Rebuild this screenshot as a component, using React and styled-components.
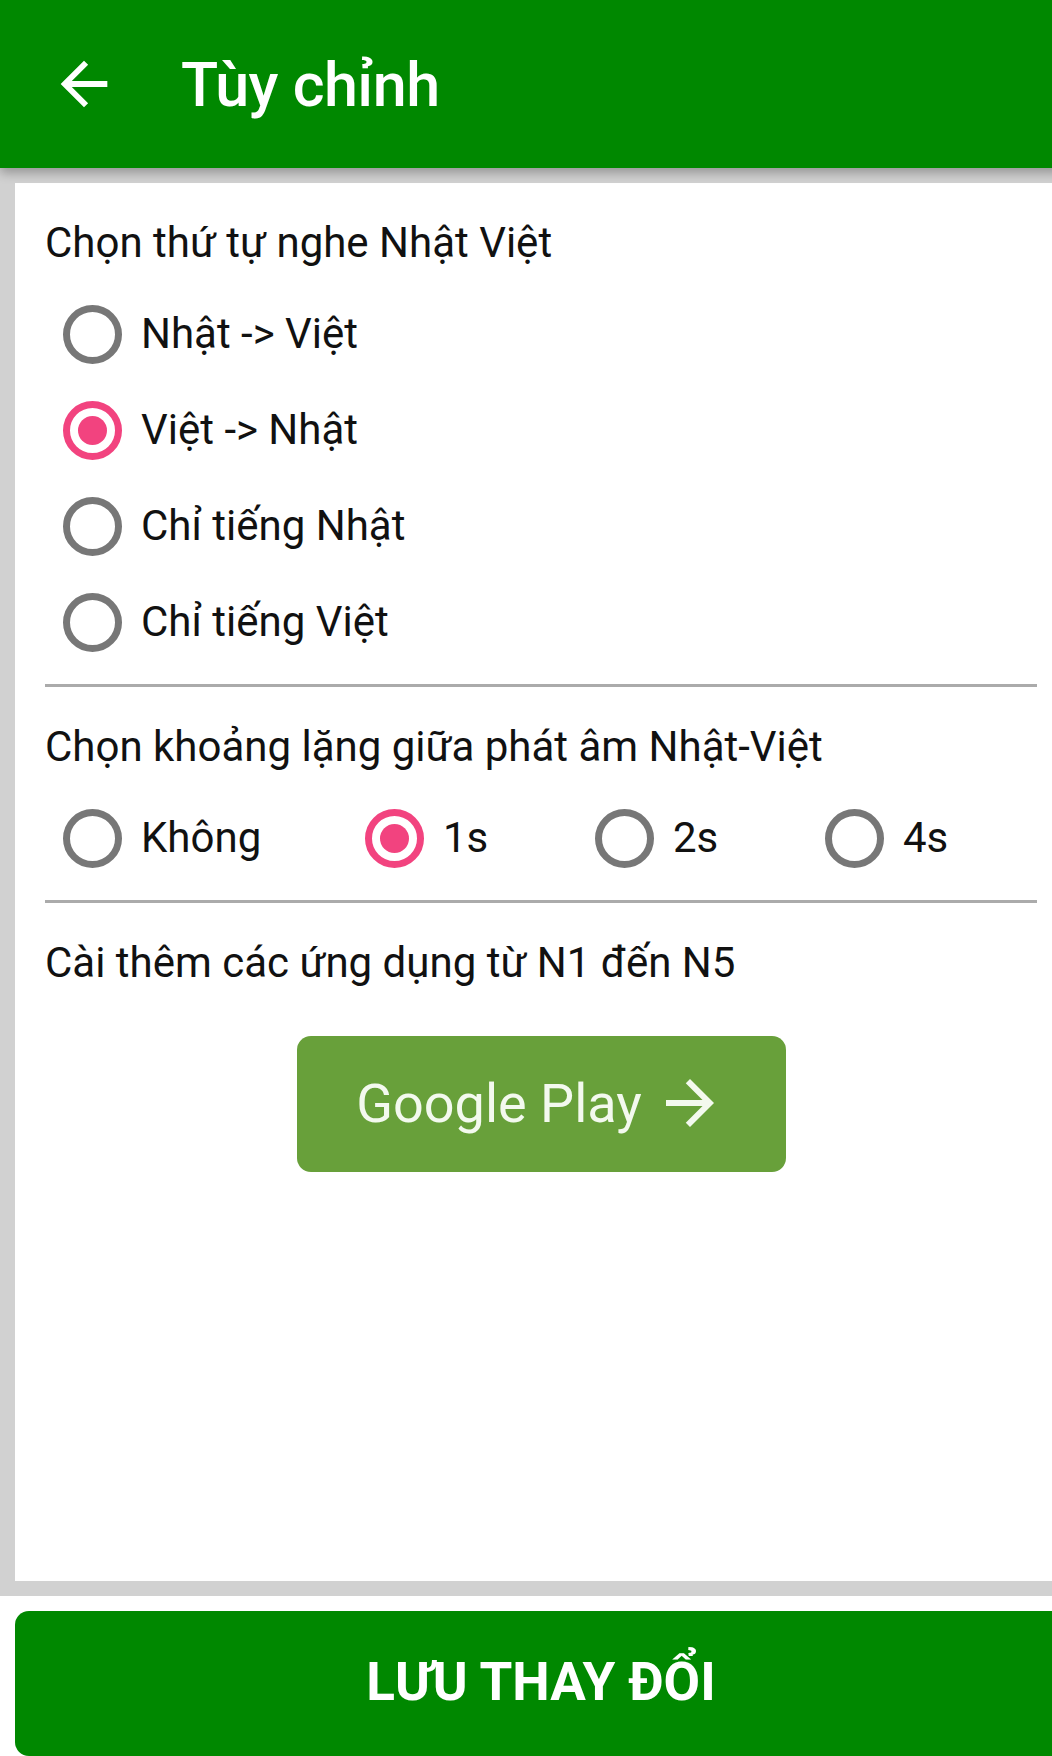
import React, { useState } from "react";
import styled, { createGlobalStyle } from "styled-components";

const GlobalStyle = createGlobalStyle`
  html, body {
    margin: 0;
    padding: 0;
    background: #ffffff;
    overflow-x: hidden;
  }
  body {
    font-family: Roboto, "Noto Sans", "Liberation Sans", sans-serif;
    color: #111;
  }
  * { box-sizing: border-box; }
`;

const Screen = styled.div`
  width: calc(100% + 30px);
  display: flex;
  flex-direction: column;
`;

const Toolbar = styled.header`
  position: relative;
  z-index: 2;
  height: 168px;
  background: #008800;
  display: flex;
  align-items: center;
  padding-left: 49px;
  gap: 62px;
  box-shadow: 0 5px 10px rgba(0, 0, 0, 0.28);
`;

const IconButton = styled.button`
  width: 70px;
  height: 70px;
  padding: 0;
  border: 0;
  background: transparent;
  display: flex;
  align-items: center;
  justify-content: center;
  color: #ffffff;
  svg { display: block; }
`;

const Title = styled.h1`
  margin: 0;
  color: #ffffff;
  font-size: 61px;
  font-weight: 500;
  letter-spacing: -0.5px;
  line-height: 1;
  padding-top: 2px;
`;

const Body = styled.main`
  background: #d1d1d1;
  padding: 15px;
`;

const Card = styled.section`
  background: #ffffff;
  height: 1398px;
  padding: 36px 30px 0 30px;
  display: flex;
  flex-direction: column;
`;

const SectionTitle = styled.div`
  font-size: 42px;
  line-height: 48px;
  color: #111;
  margin-top: ${(p) => (p.$first ? "0" : "36px")};
`;

const RadioGroup = styled.div`
  margin-top: 19px;
  padding-left: 18px;
  display: flex;
  flex-direction: ${(p) => (p.$row ? "row" : "column")};
`;

const RadioItem = styled.label`
  height: 96px;
  display: flex;
  align-items: center;
  gap: 19px;
  cursor: pointer;
  width: ${(p) => (p.$w ? p.$w + "px" : "auto")};
`;

const RadioCircle = styled.span`
  width: 59px;
  height: 59px;
  border-radius: 50%;
  border: 7px solid ${(p) => (p.$on ? "#f2437f" : "#777777")};
  display: flex;
  align-items: center;
  justify-content: center;
  flex-shrink: 0;
  &::after {
    content: "";
    width: 29px;
    height: 29px;
    border-radius: 50%;
    background: #f2437f;
    display: ${(p) => (p.$on ? "block" : "none")};
  }
`;

const RadioLabel = styled.span`
  font-size: 42px;
  line-height: 48px;
  color: #111;
`;

const Divider = styled.hr`
  margin: 14px 0 0 0;
  border: 0;
  height: 3px;
  background: #ababab;
`;

const PlayButton = styled.button`
  align-self: center;
  margin-top: 49px;
  width: 489px;
  height: 136px;
  border: 0;
  border-radius: 14px;
  background: #68a03a;
  color: #f3f9ee;
  display: flex;
  align-items: center;
  justify-content: center;
  gap: 12px;
  font-family: Roboto, "Noto Sans", sans-serif;
  font-size: 54px;
  font-weight: 400;
  padding: 0 0 2px 0;
  svg { display: block; }
`;

const Spacer = styled.div`
  height: 15px;
  background: #ffffff;
`;

const SaveButton = styled.button`
  margin: 0 15px;
  height: 145px;
  border: 0;
  border-radius: 14px;
  background: #008800;
  color: #ffffff;
  font-family: Roboto, "Noto Sans", sans-serif;
  font-size: 53px;
  font-weight: 700;
  display: flex;
  align-items: center;
  justify-content: center;
  padding-bottom: 4px;
`;

const ArrowBack = () => (
  <svg width="70" height="70" viewBox="0 0 24 24" fill="currentColor">
    <path d="M20 11H7.83l5.59-5.59L12 4l-8 8 8 8 1.41-1.41L7.83 13H20v-2z" />
  </svg>
);

const ArrowForward = () => (
  <svg width="72" height="72" viewBox="0 0 24 24" fill="currentColor">
    <path d="M12 4l-1.41 1.41L16.17 11H4v2h12.17l-5.58 5.59L12 20l8-8z" />
  </svg>
);

const orderOptions = ["Nhật -> Việt", "Việt -> Nhật", "Chỉ tiếng Nhật", "Chỉ tiếng Việt"];
const pauseOptions = [
  { label: "Không", w: 302 },
  { label: "1s", w: 230 },
  { label: "2s", w: 230 },
  { label: "4s", w: 0 },
];

export default function App() {
  const [order, setOrder] = useState(1);
  const [pause, setPause] = useState(1);
  return (
    <>
      <GlobalStyle />
      <Screen>
        <Toolbar>
          <IconButton aria-label="back">
            <ArrowBack />
          </IconButton>
          <Title>Tùy chỉnh</Title>
        </Toolbar>
        <Body>
          <Card>
            <SectionTitle $first>Chọn thứ tự nghe Nhật Việt</SectionTitle>
            <RadioGroup>
              {orderOptions.map((o, i) => (
                <RadioItem key={o} onClick={() => setOrder(i)}>
                  <RadioCircle $on={order === i} />
                  <RadioLabel>{o}</RadioLabel>
                </RadioItem>
              ))}
            </RadioGroup>
            <Divider />
            <SectionTitle>Chọn khoảng lặng giữa phát âm Nhật-Việt</SectionTitle>
            <RadioGroup $row>
              {pauseOptions.map((o, i) => (
                <RadioItem key={o.label} $w={o.w} onClick={() => setPause(i)}>
                  <RadioCircle $on={pause === i} />
                  <RadioLabel>{o.label}</RadioLabel>
                </RadioItem>
              ))}
            </RadioGroup>
            <Divider />
            <SectionTitle>Cài thêm các ứng dụng từ N1 đến N5</SectionTitle>
            <PlayButton>
              Google Play
              <ArrowForward />
            </PlayButton>
          </Card>
        </Body>
        <Spacer />
        <SaveButton>LƯU THAY ĐỔI</SaveButton>
      </Screen>
    </>
  );
}
